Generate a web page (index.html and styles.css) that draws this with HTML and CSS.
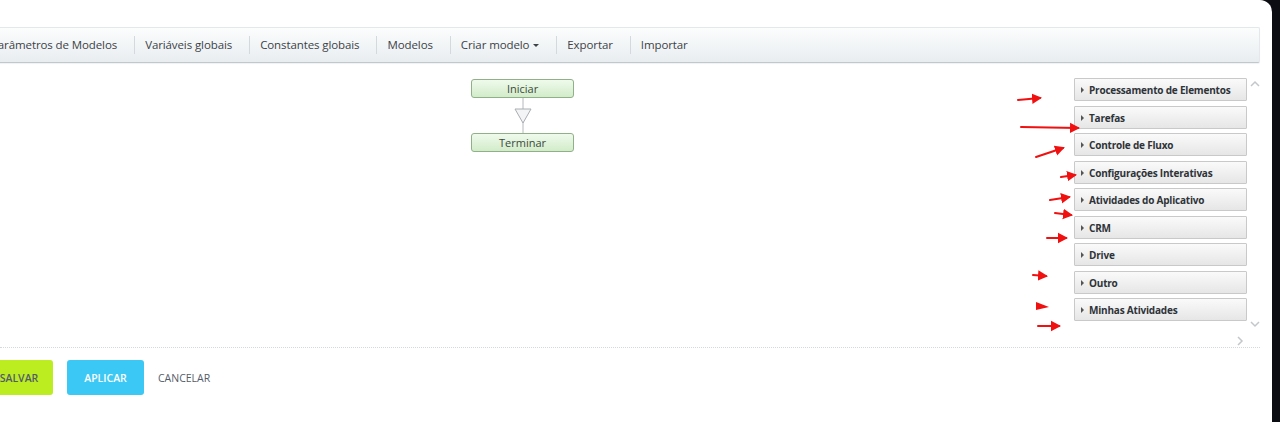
FILE: index.html
```html
<!DOCTYPE html>
<html lang="pt">
<head>
    <meta charset="UTF-8">
    <title>Designer de Processos de Negócio</title>
    <link rel="stylesheet" href="styles.css">
</head>
<body>
    <div class="panel">
        <div class="toolbar">
            <span class="tb-item">Parâmetros de Modelos</span>
            <span class="tb-item">Variáveis globais</span>
            <span class="tb-item">Constantes globais</span>
            <span class="tb-item">Modelos</span>
            <span class="tb-item">Criar modelo <span class="caret"></span></span>
            <span class="tb-item">Exportar</span>
            <span class="tb-item last">Importar</span>
        </div>

        <div class="workspace">
            <div class="canvas">
                <div class="flow">
                    <div class="node">Iniciar</div>
                    <div class="connector">
                        <svg width="20" height="35" viewBox="0 0 20 35">
                            <line x1="10" y1="0" x2="10" y2="35" stroke="#b4b8bc" stroke-width="1"/>
                            <polygon points="2,11 18,11 10,25" fill="#f3f4f5" stroke="#a9adb1" stroke-width="1"/>
                        </svg>
                    </div>
                    <div class="node">Terminar</div>
                </div>
            </div>

            <div class="sidebar">
                <div class="groups">
                    <div class="group">Processamento de Elementos</div>
                    <div class="group">Tarefas</div>
                    <div class="group">Controle de Fluxo</div>
                    <div class="group">Configurações Interativas</div>
                    <div class="group">Atividades do Aplicativo</div>
                    <div class="group">CRM</div>
                    <div class="group">Drive</div>
                    <div class="group">Outro</div>
                    <div class="group">Minhas Atividades</div>
                </div>
                <div class="scroller">
                    <svg width="10" height="8" viewBox="0 0 10 8"><polyline points="1,6 5,2 9,6" fill="none" stroke="#c4c7ca" stroke-width="1.5"/></svg>
                    <svg width="10" height="8" viewBox="0 0 10 8"><polyline points="1,2 5,6 9,2" fill="none" stroke="#c4c7ca" stroke-width="1.5"/></svg>
                </div>
            </div>
        </div>

        <div class="hscroll">
            <svg width="8" height="10" viewBox="0 0 8 10"><polyline points="2,1 6,5 2,9" fill="none" stroke="#c4c7ca" stroke-width="1.5"/></svg>
        </div>

        <div class="footer">
            <button class="btn btn-save">SALVAR</button>
            <button class="btn btn-apply">APLICAR</button>
            <button class="btn btn-cancel">CANCELAR</button>
        </div>

        <!-- red annotation arrows drawn over the screenshot -->
        <svg class="marks" width="1280" height="422" viewBox="0 0 1280 422">
            <defs>
                <marker id="head" markerWidth="6" markerHeight="6" refX="4" refY="3" orient="auto" markerUnits="strokeWidth">
                    <polygon points="0,0.4 5,3 0,5.6" fill="#f01010"/>
                </marker>
            </defs>
            <g stroke="#f01010" stroke-width="2" stroke-linecap="round" marker-end="url(#head)">
                <line x1="1018" y1="100" x2="1040" y2="98"/>
                <line x1="1021" y1="127" x2="1078" y2="128"/>
                <line x1="1036" y1="157" x2="1063" y2="148"/>
                <line x1="1061" y1="177" x2="1075" y2="175"/>
                <line x1="1050" y1="200" x2="1069" y2="197"/>
                <line x1="1055" y1="213" x2="1071" y2="215"/>
                <line x1="1047" y1="238" x2="1066" y2="238"/>
                <line x1="1033" y1="275" x2="1046" y2="276"/>
                <line x1="1038" y1="326" x2="1059" y2="326"/>
            </g>
            <polygon points="1036,302 1049,307 1036,310" fill="#f01010"/>
        </svg>
    </div>
</body>
</html>
```

FILE: styles.css
```css
* {
    margin: 0;
    padding: 0;
    box-sizing: border-box;
}

body {
    background-color: #0c0d12;
    font-family: "Open Sans", "Noto Sans", sans-serif;
    color: #333;
    width: 1280px;
    height: 422px;
    overflow: hidden;
}

.panel {
    position: relative;
    width: 1272px;
    height: 422px;
    background-color: #fff;
    border-top-right-radius: 12px;
    overflow: hidden;
    padding-top: 27px;
}

.toolbar {
    display: flex;
    align-items: center;
    height: 36px;
    margin-left: -20px;
    margin-right: 12px;
    background: linear-gradient(#fcfdfd, #e8edf0);
    border: 1px solid #e3e8eb;
    border-bottom-color: #bfc8cd;
    border-radius: 2px;
    box-shadow: 0 1px 1px rgba(0,0,0,0.06);
}

.tb-item {
    font-size: 11.5px;
    letter-spacing: -0.1px;
    color: #3c4247;
    padding: 0 17px 0 10px;
    border-right: 1px solid #d3d9dd;
    line-height: 18px;
    white-space: nowrap;
}

.tb-item.last {
    border-right: none;
}

.caret {
    display: inline-block;
    width: 0;
    height: 0;
    border-left: 3px solid transparent;
    border-right: 3px solid transparent;
    border-top: 3px solid #3c4247;
    vertical-align: middle;
    margin-left: 1px;
}

.workspace {
    display: flex;
    height: 285px;
    border-bottom: 1px dotted #d6d9dc;
    margin-right: 12px;
}

.canvas {
    flex: 1;
    padding-top: 16px;
}

.flow {
    display: flex;
    flex-direction: column;
    align-items: center;
    width: 103px;
    margin-left: 471px;
}

.node {
    width: 103px;
    height: 19px;
    line-height: 17px;
    font-size: 11px;
    text-align: center;
    color: #3b4a3b;
    background: linear-gradient(#effaec, #d2ecc9);
    border: 1px solid #8fb088;
    border-radius: 3px;
}

.connector {
    height: 35px;
}

.connector svg {
    display: block;
}

.sidebar {
    display: flex;
    padding-top: 15px;
}

.groups {
    display: flex;
    flex-direction: column;
    gap: 4.5px;
    width: 173px;
}

.group {
    height: 23px;
    line-height: 21px;
    padding-top: 1px;
    font-size: 10px;
    letter-spacing: -0.2px;
    font-weight: 700;
    color: #2e3338;
    padding-left: 14px;
    position: relative;
    background: linear-gradient(#fafafa, #e6e6e6);
    border: 1px solid #c9c9c9;
    border-radius: 1px;
    white-space: nowrap;
}

.group::before {
    content: "";
    position: absolute;
    left: 6px;
    top: 8px;
    border-top: 3px solid transparent;
    border-bottom: 3px solid transparent;
    border-left: 3px solid #555;
}

.scroller {
    display: flex;
    flex-direction: column;
    justify-content: space-between;
    padding: 2px 0 8px 3px;
    height: 258px;
}

.scroller svg {
    display: block;
}

.hscroll {
    position: absolute;
    left: 1236px;
    top: 336px;
}

.hscroll svg {
    display: block;
}

.footer {
    display: flex;
    align-items: center;
    gap: 14px;
    margin-left: -17px;
    padding-top: 12px;
}

.btn {
    font-family: "Open Sans", "Noto Sans", sans-serif;
    font-size: 10.5px;
    font-weight: 600;
    height: 35px;
    border: none;
    border-radius: 3px;
    padding: 0 18px;
    color: #fff;
}

.btn-save {
    background-color: #bbed21;
    color: #535c69;
    width: 70px;
    padding: 0 0 0 2px;
    text-align: center;
}

.btn-apply {
    background-color: #3bc8f5;
    width: 77px;
    padding: 0;
}

.btn-cancel {
    background: none;
    color: #535c69;
    font-weight: 400;
    padding: 0;
}

.marks {
    position: absolute;
    left: 0;
    top: 0;
    pointer-events: none;
}
```
